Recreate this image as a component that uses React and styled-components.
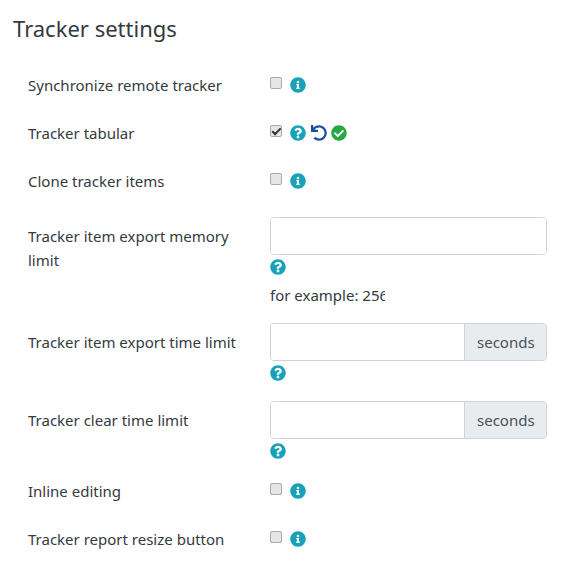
import React from 'react'
import styled, { createGlobalStyle } from 'styled-components'
import { FaInfoCircle, FaQuestionCircle, FaUndo, FaCheckCircle } from 'react-icons/fa'

const GlobalStyle = createGlobalStyle`
  html, body { margin: 0; padding: 0; background: #fff; }
  body { font-family: "Noto Sans", "Open Sans", sans-serif; color: #212529; font-size: 15px; line-height: 24px; }
`

const Page = styled.div`
  width: 562px;
  height: 562px;
  overflow: hidden;
  box-sizing: border-box;
  padding: 12px 15px 0 13px;
`

const Title = styled.h2`
  margin: 0 0 28px;
  font-size: 22px;
  line-height: 33px;
  font-weight: 400;
  color: #343a40;
`

const Form = styled.div`
  display: flex;
  flex-direction: column;
  gap: 16px;
  padding-left: 15px;
`

const Row = styled.div`
  display: grid;
  grid-template-columns: 242px 277px;
  padding-bottom: ${p => (p.$check ? '8px' : '0')};
`

const Label = styled.label`
  width: 215px;
  color: #343a40;
  padding-top: ${p => (p.$input ? '7px' : '0')};
`

const Field = styled.div`
  display: flex;
  flex-direction: column;
`

const CheckLine = styled.div`
  display: flex;
  align-items: center;
  height: 24px;
`

const Box = styled.input.attrs({ type: 'checkbox' })`
  appearance: none;
  position: relative;
  box-sizing: border-box;
  width: 12px;
  height: 12px;
  margin: 0 8px 4px 0;
  background: #e6e6e6;
  border: 1px solid #a8a8a8;
  border-radius: 2px;

  &:checked::after {
    content: '';
    position: absolute;
    left: 3px;
    top: 0;
    width: 3px;
    height: 7px;
    border: solid #333;
    border-width: 0 2px 2px 0;
    transform: rotate(45deg);
  }
`

const InputGroup = styled.div`
  display: flex;
  height: 38px;
  box-sizing: border-box;
  border: 1px solid #ced4da;
  border-radius: 4px;
  overflow: hidden;
`

const TextInput = styled.input`
  flex: 1;
  min-width: 0;
  border: 0;
  outline: 0;
  padding: 0 12px;
`

const Addon = styled.span`
  display: flex;
  flex: 0 0 82px;
  box-sizing: border-box;
  align-items: center;
  padding-left: 12px;
  background: #e9ecef;
  border-left: 1px solid #ced4da;
  color: #495057;
`

const IconLine = styled.div`
  display: flex;
  align-items: center;
  height: 24px;
  gap: 4.5px;
`

const Hint = styled.div`
  width: 115px;
  height: 24px;
  margin-top: 4px;
  overflow: hidden;
  white-space: nowrap;
  color: #343a40;
`

const Info = styled(FaInfoCircle)`
  width: 16px;
  height: 16px;
  color: #17a2b8;
`

const Help = styled(FaQuestionCircle)`
  width: 16px;
  height: 16px;
  color: #17a2b8;
`

const Undo = styled(FaUndo)`
  width: 16px;
  height: 16px;
  color: #1b4f9c;
`

const Done = styled(FaCheckCircle)`
  width: 16px;
  height: 16px;
  color: #28a745;
`

function CheckRow({ label, checked, children }) {
  return (
    <Row $check>
      <Label>{label}</Label>
      <CheckLine>
        <Box defaultChecked={checked} />
        <IconLine>{children}</IconLine>
      </CheckLine>
    </Row>
  )
}

function InputRow({ label, addon, hint }) {
  return (
    <Row>
      <Label $input>{label}</Label>
      <Field>
        <InputGroup>
          <TextInput />
          {addon && <Addon>{addon}</Addon>}
        </InputGroup>
        <IconLine><Help /></IconLine>
        {hint && <Hint>{hint}</Hint>}
      </Field>
    </Row>
  )
}

export default function App() {
  return (
    <Page>
      <GlobalStyle />
      <Title>Tracker settings</Title>
      <Form>
        <CheckRow label="Synchronize remote tracker"><Info /></CheckRow>
        <CheckRow label="Tracker tabular" checked>
          <Help /><Undo /><Done />
        </CheckRow>
        <CheckRow label="Clone tracker items"><Info /></CheckRow>
        <InputRow label="Tracker item export memory limit" hint="for example: 256" />
        <InputRow label="Tracker item export time limit" addon="seconds" />
        <InputRow label="Tracker clear time limit" addon="seconds" />
        <CheckRow label="Inline editing"><Info /></CheckRow>
        <CheckRow label="Tracker report resize button"><Info /></CheckRow>
      </Form>
    </Page>
  )
}
